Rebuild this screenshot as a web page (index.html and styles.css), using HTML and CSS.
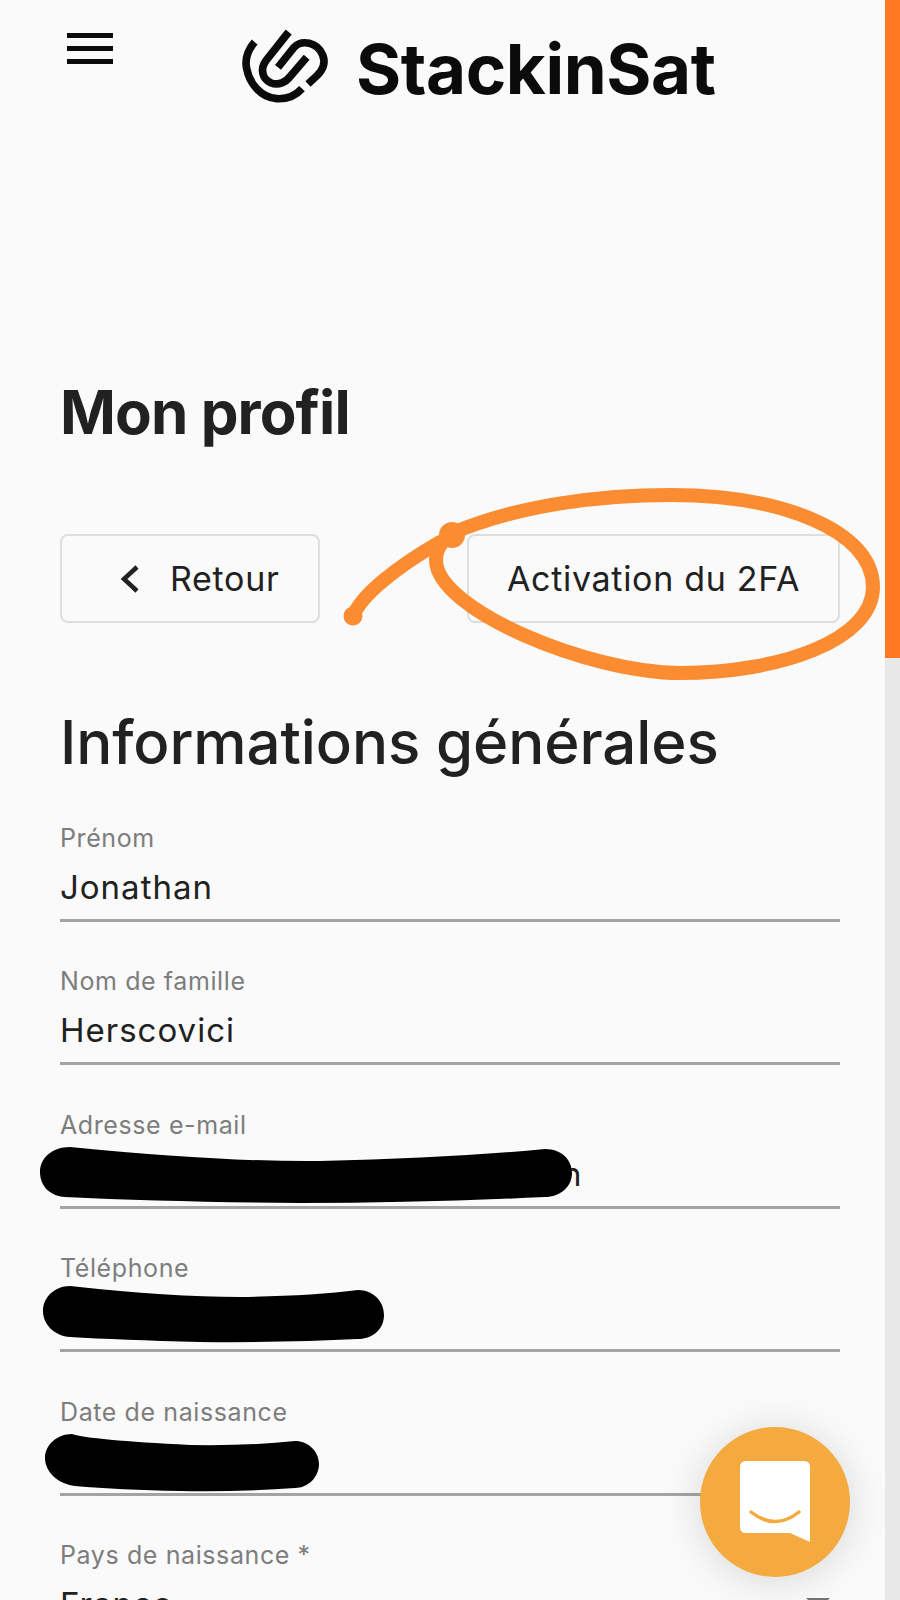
FILE: index.html
```html
<!DOCTYPE html>
<html lang="fr">
<head>
    <meta charset="UTF-8">
    <meta name="viewport" content="width=device-width, initial-scale=1.0">
    <title>StackinSat - Mon profil</title>
    <link rel="stylesheet" href="styles.css">
</head>
<body>
    <div class="screen">
        <main class="page">
            <!-- En-tête -->
            <header class="topbar">
                <div class="burger"><span></span><span></span><span></span></div>
                <div class="logo">
                    <svg class="logo-icon" viewBox="0 0 330 270" fill="none" stroke="#0b0b0b" stroke-width="23">
                        <path d="M74 66 C52 92 44 118 50 146 C58 190 92 232 140 236 C170 238 198 226 216 206"/>
                        <path d="M176 36 L108 122 C90 146 96 176 122 188 C146 198 168 186 180 170 L230 112"/>
                        <path d="M144 142 L192 82 C215 58 262 66 278 105 C288 130 278 150 262 166 L234 192"/>
                    </svg>
                    <span class="logo-text">StackinSat</span>
                </div>
            </header>

            <h1 class="title">Mon profil</h1>

            <!-- Boutons -->
            <div class="actions">
                <button class="btn btn-back">
                    <svg class="chevron" viewBox="0 0 20 30" fill="none" stroke="#212121" stroke-width="4.5">
                        <path d="M17 3 L4 15 L17 27"/>
                    </svg>
                    Retour
                </button>
                <button class="btn btn-2fa">Activation du 2FA</button>
            </div>

            <h2 class="section">Informations générales</h2>

            <!-- Formulaire -->
            <div class="field">
                <label class="label">Prénom</label>
                <div class="value">Jonathan</div>
            </div>
            <div class="field">
                <label class="label">Nom de famille</label>
                <div class="value">Herscovici</div>
            </div>
            <div class="field">
                <label class="label">Adresse e-mail</label>
                <div class="value value-hidden">n</div>
            </div>
            <div class="field">
                <label class="label">Téléphone</label>
                <div class="value"></div>
            </div>
            <div class="field">
                <label class="label">Date de naissance</label>
                <div class="value"></div>
            </div>
            <div class="field">
                <label class="label">Pays de naissance *</label>
                <div class="value value-select">France<span class="arrow"></span></div>
            </div>
        </main>

        <!-- Barre de défilement -->
        <div class="scrollbar"><div class="scroll-thumb"></div></div>

        <!-- Annotations dessinées sur la capture -->
        <svg class="marks" viewBox="0 0 900 1600">
            <path class="circle-mark" d="M353 617 C360 595 400 565 440 542"/>
            <path class="circle-mark" d="M455 532 C520 505 600 495 671 495 C780 495 873 530 873 587 C873 640 780 673 680 673 C590 673 436 610 436 560 C436 548 445 538 455 532"/>
            <circle class="circle-end" cx="353" cy="616" r="9.5"/>
            <circle class="circle-end" cx="452" cy="535" r="13"/>
            <path d="M70 1147 Q220 1162 320 1161 Q450 1158 545 1149 C562 1149 572 1160 572 1173 C572 1187 560 1197 545 1197 Q420 1203 300 1203 Q170 1202 65 1197 C50 1196 40 1186 40 1172 C40 1158 52 1147 70 1147Z"/>
            <path d="M70 1286 Q170 1297 240 1297 Q310 1296 358 1290 C373 1290 384 1301 384 1315 C384 1329 373 1339 358 1339 Q280 1343 200 1342 Q120 1340 70 1337 C55 1336 43 1325 43 1311 C43 1297 55 1286 70 1286Z"/>
            <path d="M72 1434 Q90 1440 190 1445 Q250 1446 295 1441 C308 1441 319 1451 319 1464 C319 1477 308 1488 295 1488 Q240 1492 180 1491 Q120 1490 75 1486 C58 1484 45 1472 45 1458 C45 1445 57 1434 72 1434Z"/>
        </svg>

        <!-- Bouton du chat -->
        <div class="chat">
            <svg viewBox="0 0 150 150" width="150" height="150">
                <path fill="#fff" d="M46 34 H104 Q110 34 110 40 V115 L90 106 H46 Q40 106 40 100 V40 Q40 34 46 34Z"/>
                <path fill="none" stroke="#f4aa3f" stroke-width="3.5" stroke-linecap="round" d="M51 85 Q75 104 99 85"/>
            </svg>
        </div>
    </div>
</body>
</html>
```

FILE: styles.css
```css
body {
    margin: 0;
    background: #fafafa;
    color: #212121;
    font-family: "Inter", "Liberation Sans", sans-serif;
}

.screen {
    position: relative;
    display: flex;
    height: 1600px;
    overflow: hidden;
}

.page {
    flex: 1;
    padding: 0 45px 0 60px;
}

/* En-tête */
.topbar {
    display: flex;
    height: 120px;
    padding-left: 7px;
}

.burger {
    display: flex;
    flex-direction: column;
    gap: 8px;
    width: 46px;
    margin-top: 33px;
}

.burger span {
    height: 5px;
    background: #0b0b0b;
}

.logo {
    display: flex;
    align-items: flex-start;
    margin-left: 117px;
    margin-top: 20px;
}

.logo-icon {
    width: 110px;
    height: 90px;
}

.logo-text {
    margin-left: 16px;
    margin-top: 7px;
    font-size: 69px;
    line-height: 84px;
    font-weight: 700;
    letter-spacing: -0.4px;
    color: #0b0b0b;
}

/* Titres */
.title {
    margin: 250px 0 0;
    font-size: 60px;
    line-height: 84px;
    font-weight: 700;
    letter-spacing: -0.9px;
}

.actions {
    display: flex;
    justify-content: space-between;
    margin-top: 80px;
}

.btn {
    display: flex;
    align-items: center;
    height: 89px;
    background: transparent;
    border: 2px solid #dedede;
    border-radius: 8px;
    color: #212121;
    font-family: inherit;
    font-size: 34px;
    letter-spacing: 0.7px;
}

.btn-back {
    width: 260px;
    padding-left: 58px;
}

.btn-2fa {
    width: 373px;
    justify-content: center;
}

.chevron {
    width: 20px;
    height: 30px;
    margin-right: 30px;
}

.section {
    margin: 79px 0 41px;
    font-size: 60px;
    line-height: 80px;
    font-weight: 450;
    letter-spacing: -0.1px;
}

/* Formulaire */
.field {
    height: 143.4px;
    box-sizing: border-box;
}

.label {
    display: block;
    font-size: 25px;
    line-height: 30px;
    color: #7d7d7d;
    letter-spacing: 0.6px;
}

.value {
    box-sizing: border-box;
    height: 69px;
    padding-top: 13px;
    border-bottom: 3px solid #a3a3a3;
    font-size: 33px;
    line-height: 42px;
    letter-spacing: 1px;
}

.value-hidden {
    padding-left: 502px;
}

.value-select {
    display: flex;
    justify-content: space-between;
}

.arrow {
    width: 0;
    height: 0;
    margin-top: 15px;
    margin-right: 10px;
    border-left: 12.5px solid transparent;
    border-right: 12.5px solid transparent;
    border-top: 12px solid #757575;
}

/* Barre de défilement */
.scrollbar {
    width: 15px;
    background: #e8e8e8;
}

.scroll-thumb {
    height: 658px;
    background: #fd7a22;
}

/* Dessins par-dessus la page */
.marks {
    position: absolute;
    top: 0;
    left: 0;
    width: 900px;
    height: 1600px;
    fill: #000;
}

.marks .circle-mark {
    fill: none;
    stroke: #fb8c32;
    stroke-width: 14;
    stroke-linecap: round;
    stroke-linejoin: round;
}

.marks .circle-end {
    fill: #fb8c32;
}

.chat {
    position: absolute;
    left: 700px;
    top: 1427px;
    width: 150px;
    height: 150px;
    border-radius: 50%;
    background: #f4aa3f;
    box-shadow: 0 4px 40px rgba(0, 0, 0, 0.14);
}

.chat svg {
    display: block;
}
```
